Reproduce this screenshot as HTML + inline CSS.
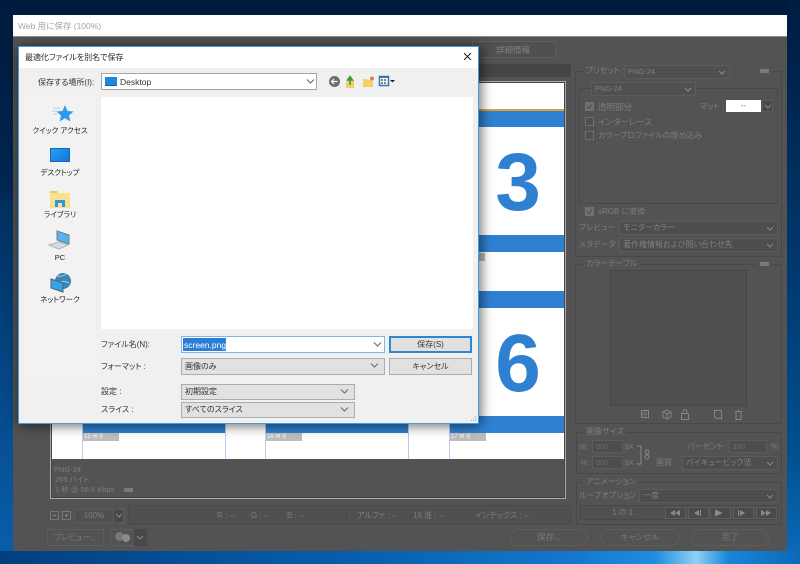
<!DOCTYPE html>
<html lang="ja">
<head>
<meta charset="utf-8">
<title>Web 用に保存</title>
<style>
*{box-sizing:border-box;margin:0;padding:0}
html,body{width:800px;height:564px;overflow:hidden;background:#00204a}
body{position:relative;font-family:"Liberation Sans","Noto Sans CJK JP",sans-serif;font-size:8px;color:#333;font-feature-settings:"palt"}
#root{position:absolute;left:0;top:0;width:800px;height:564px;filter:blur(.3px)}
.a{position:absolute}
.t{position:absolute;white-space:nowrap;line-height:12px;padding-top:1px}
.d{color:#7d7d7d}
.dd{position:absolute;background:#4d4d4d;border:1px solid #5c5c5c;color:#7f7f7f;font-size:8px;line-height:12px;padding-left:3px;white-space:nowrap;height:14px}
.dd svg{position:absolute;right:3px;top:3px}
.grp{position:absolute;border:1px solid #484848;border-radius:2px}
.lab{position:absolute;background:#535353;color:#7d7d7d;padding:0 3px;line-height:12px;font-size:8px;white-space:nowrap}
.cb{position:absolute;width:9px;height:9px;border:1px solid #707070;background:#4f4f4f}
.cb.on{background:#707070}
.cb svg{position:absolute;left:0;top:0}
.band{position:absolute;background:#3080d2}
.wb{position:absolute;background:#e1e1e1;border:1px solid #adadad;height:16px;font-size:8px;line-height:14px;padding-left:3px;color:#333;white-space:nowrap}
.wb svg{position:absolute;right:5px;top:3px}
.btn{position:absolute;background:#e1e1e1;border:1px solid #adadad;text-align:center;line-height:15px;font-size:8px;color:#333}
.side{position:absolute;left:0;width:76px;text-align:center;font-size:7.5px;line-height:11px;color:#222}
.rb{position:absolute;border:1px solid #5d5d5d;border-radius:9px;height:17px;top:529px;text-align:center;color:#777;font-size:8.5px;line-height:15px}
.tag{position:absolute;background:#bdbdbd;height:8px;top:433px;color:#fff;font-size:6px;line-height:8px;padding-left:1px}
.sl{position:absolute;width:1px;background:#b8ccf2;top:416px;height:43px}
.pb{position:absolute;width:21px;height:12px;top:507px;background:#4a4a4a;border:1px solid #5e5e5e}
.num{position:absolute;left:468px;width:100px;text-align:center;font:bold 82px/100px "Liberation Sans",sans-serif;color:#3080d2}
</style>
</head>
<body>
<div id="root">
<!-- desktop -->
<div class="a" style="left:0;top:0;width:800px;height:564px;background:linear-gradient(180deg,#001a3c 0,#002650 30%,#004684 65%,#0066b4 100%)"></div>
<div class="a" style="left:0;top:200px;width:13px;height:364px;background:linear-gradient(180deg,#00305f,#0a5fae)"></div>
<div class="a" style="left:787px;top:0;width:13px;height:564px;background:linear-gradient(180deg,#001c40,#003a72 50%,#00508f 80%,#0b6cbd)"></div>
<div class="a" style="left:0;top:551px;width:800px;height:13px;background:linear-gradient(90deg,#033f7d,#075fae 45%,#1478cc 72%,#1f8ee0 82%,#8fd0f5 87%,#1a86d8 91%,#0a68b8)"></div>

<!-- PS window -->
<div class="a" style="left:13px;top:15px;width:774px;height:536px;background:#535353"></div>
<div class="a" style="left:13px;top:15px;width:774px;height:22px;background:#fff;border-bottom:1px solid #8d8d8d"></div>
<div class="t" style="left:18px;top:19px;font-size:8.5px;color:#a5a5a5">Web 用に保存 (100%)</div>

<!-- tab bar -->
<div class="a" style="left:472px;top:41px;width:84px;height:17px;border:1px solid #5f5f5f;background:#505050"></div>
<div class="t d" style="left:496px;top:43px;font-size:8.5px;color:#838383">詳細情報</div>
<div class="a" style="left:478px;top:64px;width:93px;height:13px;background:#454545"></div>

<!-- preview frame -->
<div class="a" style="left:50px;top:81px;width:516px;height:418px;border:1px solid #a9a9a9;background:#535353;box-shadow:inset 0 0 0 1px #444"></div>
<div class="a" style="left:52px;top:83px;width:512px;height:376px;background:#fff"></div>
<div class="a" style="left:52px;top:109px;width:512px;height:2px;background:#dba039"></div>
<div class="band" style="left:52px;top:111px;width:512px;height:16px"></div>
<div class="band" style="left:52px;top:235px;width:512px;height:17px"></div>
<div class="band" style="left:52px;top:291px;width:512px;height:17px"></div>
<div class="band" style="left:82px;top:416px;width:143px;height:17px"></div>
<div class="band" style="left:265px;top:416px;width:143px;height:17px"></div>
<div class="band" style="left:449px;top:416px;width:115px;height:17px"></div>
<div class="sl" style="left:82px"></div><div class="sl" style="left:225px"></div><div class="sl" style="left:265px"></div><div class="sl" style="left:408px"></div><div class="sl" style="left:449px"></div>
<div class="tag" style="left:83px;width:36px">15 ✉ ⚲</div>
<div class="tag" style="left:266px;width:36px">16 ✉ ⚲</div>
<div class="tag" style="left:450px;width:36px">17 ✉ ⚲</div>
<div class="a" style="left:479px;top:253px;width:6px;height:8px;background:#bdbdbd"></div>
<div class="num" style="top:133px">3</div>
<div class="num" style="top:314px">6</div>

<!-- info -->
<div class="t d" style="left:54px;top:463px;font-size:7.5px">PNG-24</div>
<div class="t d" style="left:55px;top:473px;font-size:7.5px">265 バイト</div>
<div class="t d" style="left:55px;top:483px;font-size:7.5px">1 秒 @ 56.6 Kbps</div>
<div class="a" style="left:124px;top:488px;width:9px;height:4px;background:#7a7a7a"></div>

<!-- status -->
<div class="a" style="left:50px;top:511px;width:9px;height:9px;border:1px solid #777"></div>
<div class="a" style="left:53px;top:515px;width:3px;height:1px;background:#888"></div>
<div class="a" style="left:62px;top:511px;width:9px;height:9px;border:1px solid #777"></div>
<div class="a" style="left:65px;top:515px;width:3px;height:1px;background:#888"></div>
<div class="a" style="left:66px;top:514px;width:1px;height:3px;background:#888"></div>
<div class="dd" style="left:74px;top:509px;width:50px;text-align:center;padding-left:0;padding-right:10px;background:#505050">100%</div>
<div class="a" style="left:113px;top:509px;width:11px;height:14px;background:#474747;border:1px solid #5c5c5c"></div>
<svg class="a" style="left:115px;top:513px" width="8" height="6"><path d="M1 1l3 3 3-3" fill="none" stroke="#8a8a8a"/></svg>
<div class="a" style="left:128px;top:505px;width:443px;height:20px;background:#505050;border:1px solid #494949;border-radius:2px"></div>
<div class="t d" style="left:217px;top:509px">R : --</div>
<div class="t d" style="left:251px;top:509px">G : --</div>
<div class="t d" style="left:287px;top:509px">B : --</div>
<div class="a" style="left:346px;top:509px;width:1px;height:11px;background:#484848"></div>
<div class="t d" style="left:357px;top:509px">アルファ : --</div>
<div class="t d" style="left:413px;top:509px">16 進 : --</div>
<div class="t d" style="left:475px;top:509px">インデックス : --</div>

<!-- bottom buttons -->
<div class="a" style="left:47px;top:529px;width:57px;height:17px;border:1px solid #5d5d5d;color:#777;text-align:center;line-height:15px">プレビュー...</div>
<div class="a" style="left:110px;top:529px;width:37px;height:17px;border:1px solid #5d5d5d"></div>
<div class="a" style="left:134px;top:529px;width:13px;height:17px;background:#484848"></div>
<svg class="a" style="left:136px;top:535px" width="8" height="6"><path d="M1 1l3 3 3-3" fill="none" stroke="#8a8a8a"/></svg>
<div class="a" style="left:115px;top:532px;width:9px;height:9px;border-radius:50%;background:#777"></div>
<div class="a" style="left:122px;top:534px;width:8px;height:8px;border-radius:50%;background:#8a8a8a"></div>
<div class="rb" style="left:510px;width:78px">保存...</div>
<div class="rb" style="left:601px;width:78px">キャンセル</div>
<div class="rb" style="left:691px;width:78px">完了</div>

<!-- right panel -->
<div class="grp" style="left:575px;top:71px;width:207px;height:186px"></div>
<div class="lab" style="left:583px;top:65px">プリセット :</div>
<div class="dd" style="left:624px;top:65px;width:106px;background:#505050;font-size:7.5px">PNG-24<svg width="8" height="7"><path d="M1 2l3 3 3-3" fill="none" stroke="#8a8a8a"/></svg></div>
<div class="a" style="left:730px;top:71px;width:28px;height:1px;background:#535353"></div>
<div class="a" style="left:756px;top:68px;width:16px;height:6px;background:#535353"></div>
<div class="a" style="left:760px;top:69px;width:9px;height:4px;background:#7a7a7a"></div>
<div class="grp" style="left:579px;top:88px;width:199px;height:116px"></div>
<div class="dd" style="left:591px;top:82px;width:105px;background:#505050;font-size:7.5px">PNG-24<svg width="8" height="7"><path d="M1 2l3 3 3-3" fill="none" stroke="#8a8a8a"/></svg></div>
<div class="cb on" style="left:585px;top:102px"><svg width="7" height="7"><path d="M1 3.500l2 2 3-4" fill="none" stroke="#4a4a4a"/></svg></div>
<div class="t d" style="left:598px;top:100px;font-size:8.5px">透明部分</div>
<div class="t d" style="left:700px;top:100px">マット :</div>
<div class="a" style="left:726px;top:100px;width:35px;height:12px;background:#fff;color:#777;text-align:center;line-height:12px;font-size:8px">--</div>
<div class="a" style="left:762px;top:100px;width:11px;height:12px;background:#484848;border:1px solid #5c5c5c"></div>
<svg class="a" style="left:764px;top:104px" width="8" height="6"><path d="M1 1l3 3 3-3" fill="none" stroke="#8a8a8a"/></svg>
<div class="cb" style="left:585px;top:117px"></div>
<div class="t d" style="left:598px;top:115px;font-size:8.5px">インターレース</div>
<div class="cb" style="left:585px;top:131px"></div>
<div class="t d" style="left:598px;top:129px">カラープロファイルの埋め込み</div>
<div class="cb on" style="left:585px;top:207px"><svg width="7" height="7"><path d="M1 3.500l2 2 3-4" fill="none" stroke="#4a4a4a"/></svg></div>
<div class="t d" style="left:598px;top:205px">sRGB に変換</div>
<div class="t d" style="left:579px;top:221px">プレビュー :</div>
<div class="dd" style="left:619px;top:221px;width:159px">モニターカラー<svg width="8" height="7"><path d="M1 2l3 3 3-3" fill="none" stroke="#8a8a8a"/></svg></div>
<div class="t d" style="left:579px;top:238px">メタデータ :</div>
<div class="dd" style="left:619px;top:238px;width:159px">著作権情報および問い合わせ先<svg width="8" height="7"><path d="M1 2l3 3 3-3" fill="none" stroke="#8a8a8a"/></svg></div>

<div class="grp" style="left:575px;top:264px;width:207px;height:160px"></div>
<div class="lab" style="left:583px;top:258px">カラーテーブル</div>
<div class="a" style="left:756px;top:261px;width:16px;height:6px;background:#535353"></div>
<div class="a" style="left:760px;top:262px;width:9px;height:4px;background:#7a7a7a"></div>
<div class="a" style="left:610px;top:270px;width:137px;height:136px;background:#4f4f4f;border:1px solid #464646"></div>
<svg class="a" style="left:640px;top:409px" width="105" height="12" fill="none" stroke="#858585">
<rect x="1.500" y="1.500" width="7" height="7"/><path d="M1.500 5h7M5 1.500v7" stroke-dasharray="2 1"/>
<path d="M23 3l4-2 4 2v5l-4 2-4-2zM23 3l4 2 4-2M27 5v5"/>
<rect x="41.500" y="4.500" width="7" height="6"/><path d="M43 4.500V2.500a2 2 0 0 1 4 0v2"/>
<path d="M74.500 1.500h7v8h-5l-2-2z"/>
<path d="M95 2.500h7M96 3v7.500h5V3M98 1h1"/>
</svg>

<div class="grp" style="left:576px;top:432px;width:206px;height:42px"></div>
<div class="lab" style="left:583px;top:426px">画像サイズ</div>
<div class="t d" style="left:579px;top:440px;font-size:7.5px">W:</div>
<div class="dd" style="left:592px;top:440px;width:31px;height:13px;color:#6d6d6d;font-size:7.5px">800</div>
<div class="t d" style="left:625px;top:440px">px</div>
<div class="t d" style="left:581px;top:456px;font-size:7.5px">H:</div>
<div class="dd" style="left:592px;top:456px;width:31px;height:13px;color:#6d6d6d;font-size:7.5px">800</div>
<div class="t d" style="left:625px;top:456px">px</div>
<svg class="a" style="left:636px;top:445px" width="16" height="21" fill="none" stroke="#8a8a8a"><path d="M1 1h4v18H1"/><circle cx="11" cy="7" r="2"/><circle cx="11" cy="12" r="2"/></svg>
<div class="t d" style="left:687px;top:440px">パーセント :</div>
<div class="dd" style="left:729px;top:440px;width:38px;height:13px;color:#6d6d6d;font-size:7.5px">100</div>
<div class="t d" style="left:771px;top:440px">%</div>
<div class="t d" style="left:656px;top:456px">画質 :</div>
<div class="dd" style="left:682px;top:456px;width:96px">バイキュービック法<svg width="8" height="7"><path d="M1 2l3 3 3-3" fill="none" stroke="#8a8a8a"/></svg></div>

<div class="grp" style="left:576px;top:482px;width:206px;height:43px"></div>
<div class="lab" style="left:583px;top:476px">アニメーション</div>
<div class="t d" style="left:579px;top:489px">ループオプション :</div>
<div class="dd" style="left:639px;top:489px;width:139px">一度<svg width="8" height="7"><path d="M1 2l3 3 3-3" fill="none" stroke="#8a8a8a"/></svg></div>
<div class="a" style="left:579px;top:505px;width:199px;height:15px;background:#505050;border:1px solid #484848"></div>
<div class="t d" style="left:612px;top:506px">1 の 1</div>
<div class="pb" style="left:665px"></div><div class="pb" style="left:688px"></div><div class="pb" style="left:710px"></div><div class="pb" style="left:733px"></div><div class="pb" style="left:756px"></div>
<svg class="a" style="left:665px;top:507px" width="112" height="12" fill="#8a8a8a">
<path d="M5 6l5-3v6zM10 6l5-3v6z"/><path d="M29 6l5-3v6zM35 3h1v6h-1z"/><path d="M50 2.500l8 3.500-8 3.500z"/><path d="M73 3h1v6h-1zM75 3l5 3-5 3z"/><path d="M96 3l5 3-5 3zM101 3l5 3-5 3z"/>
</svg>

<!-- save dialog -->
<div class="a" style="left:18px;top:46px;width:461px;height:378px;background:#f0f0f0;border:1px solid #3f9ce0;box-shadow:0 2px 12px rgba(0,0,0,.45),4px 0 10px rgba(0,0,0,.22)">
  <div class="a" style="left:0;top:0;width:459px;height:21px;background:#fff"></div>
  <div class="t" style="left:6px;top:4px;color:#222">最適化ファイルを別名で保存</div>
  <svg class="a" style="left:444px;top:5px" width="10" height="10"><path d="M1 1l7 7M8 1l-7 7" stroke="#222" stroke-width="1"/></svg>

  <div class="t" style="left:19px;top:29px;color:#333">保存する場所(I):</div>
  <div class="a" style="left:82px;top:26px;width:216px;height:17px;background:#fff;border:1px solid #a5a5a5"></div>
  <div class="a" style="left:86px;top:30px;width:12px;height:9px;background:#1e88e0;border-bottom:1px solid #0d5fa8"></div>
  <div class="t" style="left:101px;top:28px;font-size:8.5px;color:#333">Desktop</div>
  <svg class="a" style="left:287px;top:31px" width="9" height="7"><path d="M1 1.500l3.500 3.500L8 1.500" fill="none" stroke="#666"/></svg>

  <svg class="a" style="left:309px;top:27px" width="70" height="16">
    <circle cx="6.500" cy="7.500" r="5.500" fill="#6e6e6e"/><path d="M9.500 7.500H4M6 5l-2.500 2.500L6 10" fill="none" stroke="#fff" stroke-width="1.200"/>
    <path d="M18 8l3-2h5v8h-8z" fill="#f4cd68"/><path d="M22 11V5M19.500 6L22 2.500 24.500 6z" stroke="#3d9a2f" fill="#3d9a2f" stroke-width="1.500"/>
    <path d="M35 5h4l1 1h5v7H35z" fill="#f6d06c"/><circle cx="44" cy="4.500" r="2" fill="#e8764f"/>
    <rect x="51.500" y="2.500" width="9" height="9" fill="#fff" stroke="#2678c8" stroke-width="1.500"/><path d="M51 2h10v2H51z" fill="#2678c8"/><path d="M53 5h2v2h-2zM56 5h2v2h-2z" fill="#d35f4e"/><path d="M53 8h2v2h-2zM56 8h2v2h-2z" fill="#5a9e4d"/>
    <path d="M62 6h5l-2.500 2.500z" fill="#222"/>
  </svg>

  <!-- sidebar -->
  <div class="a" style="left:5px;top:50px;width:72px;height:281px;background:#f2f2f2"></div>
  <svg class="a" style="left:33px;top:57px" width="22" height="20"><path d="M13 1l2.500 6 6 .5-4.500 4 1.400 6-5.400-3.200-5.400 3.200 1.400-6-4.500-4 6-.5z" fill="#2a9cef"/><path d="M1 4h7M0 7h5M2 10h3" stroke="#a8d4f5"/></svg>
  <div class="side" style="left:3px;top:78px">クイック アクセス</div>
  <div class="a" style="left:31px;top:101px;width:20px;height:14px;background:linear-gradient(135deg,#2a9cf2,#0f78d8);border:1px solid #1566b5"></div>
  <div class="side" style="left:3px;top:120px">デスクトップ</div>
  <svg class="a" style="left:31px;top:141px" width="20" height="20"><path d="M0 3h7l2 2h11v15H0z" fill="#fbe08f"/><path d="M0 3h7v2H0z" fill="#e9c96a"/><path d="M5 19v-7h10v7h-3v-4H8v4z" fill="#2a97e8"/></svg>
  <div class="side" style="left:3px;top:162px">ライブラリ</div>
  <svg class="a" style="left:29px;top:183px" width="24" height="20"><path d="M9 1l12 4v9L9 10z" fill="#55b2ee" stroke="#6e7f8c"/><path d="M1 15l10-3 9 3-9 4z" fill="#d8dde0" stroke="#aeb4b8"/></svg>
  <div class="side" style="left:3px;top:205px">PC</div>
  <svg class="a" style="left:30px;top:226px" width="24" height="20"><circle cx="14" cy="8" r="8" fill="#3a86b8"/><path d="M8 3c3 1 6 0 9-2M10 10c2-2 7-2 10 0" stroke="#a8d0e8" fill="none"/><path d="M2 6l12 4v9L2 15z" fill="#35a3ec" stroke="#54626e"/></svg>
  <div class="side" style="left:3px;top:247px">ネットワーク</div>

  <!-- list -->
  <div class="a" style="left:82px;top:50px;width:372px;height:232px;background:#fff"></div>

  <div class="t" style="left:82px;top:291px">ファイル名(N):</div>
  <div class="a" style="left:162px;top:289px;width:204px;height:17px;background:#fff;border:1px solid #7db8e8"></div>
  <div class="a" style="left:164px;top:291px;width:43px;height:13px;background:#2a7fd4"></div>
  <div class="t" style="left:165px;top:291px;font-size:8.5px;color:#fff">screen.png</div>
  <svg class="a" style="left:354px;top:294px" width="9" height="7"><path d="M1 1.500l3.500 3.500L8 1.500" fill="none" stroke="#666"/></svg>
  <div class="btn" style="left:370px;top:289px;width:83px;height:17px;border:2px solid #2f86d2;line-height:13px">保存(S)</div>

  <div class="t" style="left:82px;top:313px">フォーマット :</div>
  <div class="wb" style="left:162px;top:311px;width:204px;height:17px;line-height:15px">画像のみ<svg width="9" height="7"><path d="M1 1.500l3.500 3.500L8 1.500" fill="none" stroke="#666"/></svg></div>
  <div class="btn" style="left:370px;top:311px;width:83px;height:17px">キャンセル</div>

  <div class="t" style="left:82px;top:338px">設定 :</div>
  <div class="wb" style="left:162px;top:337px;width:174px">初期設定<svg width="9" height="7"><path d="M1 1.500l3.500 3.500L8 1.500" fill="none" stroke="#666"/></svg></div>
  <div class="t" style="left:82px;top:356px">スライス :</div>
  <div class="wb" style="left:162px;top:355px;width:174px">すべてのスライス<svg width="9" height="7"><path d="M1 1.500l3.500 3.500L8 1.500" fill="none" stroke="#666"/></svg></div>
  <svg class="a" style="left:450px;top:368px" width="8" height="8"><path d="M6 1h1v1H6zM4 3h1v1H4zM6 3h1v1H6zM2 5h1v1H2zM4 5h1v1H4zM6 5h1v1H6z" fill="#aaa"/></svg>
</div>
</div>
</body>
</html>
